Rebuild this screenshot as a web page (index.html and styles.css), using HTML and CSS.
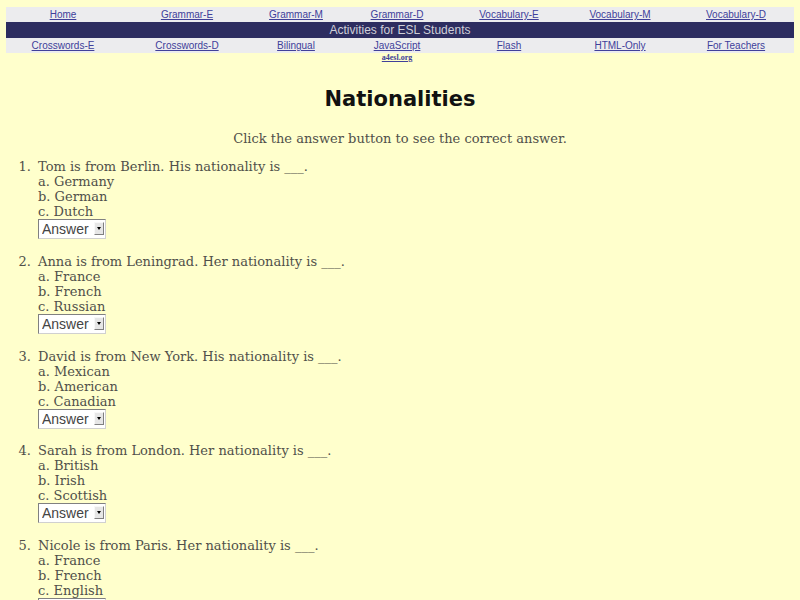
FILE: index.html
```html
<!DOCTYPE html>
<html>
<head>
<meta charset="utf-8">
<title>Nationalities</title>
<link rel="stylesheet" href="styles.css">
</head>
<body>
<div class="nav">
  <a class="cell r1" href="#">Home</a>
  <a class="cell r1" href="#">Grammar-E</a>
  <a class="cell r1" href="#">Grammar-M</a>
  <a class="cell r1" href="#">Grammar-D</a>
  <a class="cell r1" href="#">Vocabulary-E</a>
  <a class="cell r1" href="#">Vocabulary-M</a>
  <a class="cell r1" href="#">Vocabulary-D</a>
  <div class="banner">Activities for ESL Students</div>
  <a class="cell r3" href="#">Crosswords-E</a>
  <a class="cell r3" href="#">Crosswords-D</a>
  <a class="cell r3" href="#">Bilingual</a>
  <a class="cell r3" href="#">JavaScript</a>
  <a class="cell r3" href="#">Flash</a>
  <a class="cell r3" href="#">HTML-Only</a>
  <a class="cell r3" href="#">For Teachers</a>
  <a class="site" href="#">a4esl.org</a>
</div>

<h1 class="title">Nationalities</h1>
<p class="intro">Click the answer button to see the correct answer.</p>

<ol class="quiz">
  <li class="q">
    <div class="body">
      <div class="line">Tom is from Berlin. His nationality is ___.</div>
      <div class="line">a. Germany</div>
      <div class="line">b. German</div>
      <div class="line">c. Dutch</div>
      <span class="sel"><select><option>Answer</option></select><span class="arrow"></span></span>
    </div>
  </li>
  <li class="q">
    <div class="body">
      <div class="line">Anna is from Leningrad. Her nationality is ___.</div>
      <div class="line">a. France</div>
      <div class="line">b. French</div>
      <div class="line">c. Russian</div>
      <span class="sel"><select><option>Answer</option></select><span class="arrow"></span></span>
    </div>
  </li>
  <li class="q">
    <div class="body">
      <div class="line">David is from New York. His nationality is ___.</div>
      <div class="line">a. Mexican</div>
      <div class="line">b. American</div>
      <div class="line">c. Canadian</div>
      <span class="sel"><select><option>Answer</option></select><span class="arrow"></span></span>
    </div>
  </li>
  <li class="q">
    <div class="body">
      <div class="line">Sarah is from London. Her nationality is ___.</div>
      <div class="line">a. British</div>
      <div class="line">b. Irish</div>
      <div class="line">c. Scottish</div>
      <span class="sel"><select><option>Answer</option></select><span class="arrow"></span></span>
    </div>
  </li>
  <li class="q">
    <div class="body">
      <div class="line">Nicole is from Paris. Her nationality is ___.</div>
      <div class="line">a. France</div>
      <div class="line">b. French</div>
      <div class="line">c. English</div>
      <span class="sel"><select><option>Answer</option></select><span class="arrow"></span></span>
    </div>
  </li>
</ol>
</body>
</html>
```

FILE: styles.css
```css
html, body {
  background: #ffffcc;
}
body {
  margin: 0;
  padding: 7px 6px 0 6px;
  font-family: "DejaVu Serif", serif;
  font-size: 13px;
  color: #50504a;
}

.nav {
  display: grid;
  grid-template-columns: 114px 134px 84px 118px 106px 116px 116px;
  grid-template-rows: 15px 16px 15px 9px;
  width: 788px;
  font-family: "Liberation Sans", Arial, sans-serif;
  font-size: 10px;
}
.cell {
  display: flex;
  align-items: center;
  justify-content: center;
  background: #ececee;
  color: #40409a;
  text-decoration: underline;
}
.r1 { grid-row: 1; }
.r3 { grid-row: 3; }
.banner {
  grid-row: 2;
  grid-column: 1 / -1;
  background: #2d2d60;
  color: #cfcfd8;
  font-size: 12px;
  display: flex;
  align-items: center;
  justify-content: center;
}
.site {
  grid-row: 4;
  grid-column: 4;
  justify-self: center;
  font-family: "Liberation Serif", serif;
  font-weight: bold;
  font-size: 8px;
  line-height: 9px;
  color: #40409a;
}

.title {
  margin: 23px 0 0 0;
  text-align: center;
  font-family: "DejaVu Sans", sans-serif;
  font-weight: bold;
  font-size: 21px;
  line-height: 28px;
  color: #111;
}
.intro {
  margin: 18px 0 0 0;
  text-align: center;
  line-height: 15px;
}

.quiz {
  list-style: none;
  counter-reset: q;
  margin: 13px 0 0 0;
  padding: 0;
}
.q {
  counter-increment: q;
  display: flex;
  margin-bottom: 13px;
}
.q::before {
  content: counter(q) ".";
  flex: none;
  width: 25px;
  text-align: right;
  margin-right: 7px;
  line-height: 15px;
}
.line {
  line-height: 15px;
  white-space: nowrap;
}
.sel {
  position: relative;
  display: block;
  width: 68px;
  height: 20px;
  margin-top: 0;
  margin-bottom: 1.75px;
}
.sel select {
  appearance: none;
  -webkit-appearance: none;
  width: 68px;
  height: 20px;
  margin: 0;
  padding: 0 0 0 3px;
  border: 1px solid;
  border-color: #808080 #d0d0d0 #d0d0d0 #808080;
  border-radius: 0;
  background: #ffffff;
  font-family: "Liberation Sans", Arial, sans-serif;
  font-size: 14px;
  color: #444444;
}
.arrow {
  position: absolute;
  right: 2px;
  top: 3px;
  width: 10px;
  height: 13px;
  box-sizing: border-box;
  background: #e6e6e6;
  border: 1px solid;
  border-color: #f8f8f8 #808080 #808080 #f8f8f8;
  pointer-events: none;
}
.arrow::after {
  content: "";
  position: absolute;
  left: 2px;
  top: 4px;
  border-left: 2px solid transparent;
  border-right: 2px solid transparent;
  border-top: 3px solid #000;
}
```
